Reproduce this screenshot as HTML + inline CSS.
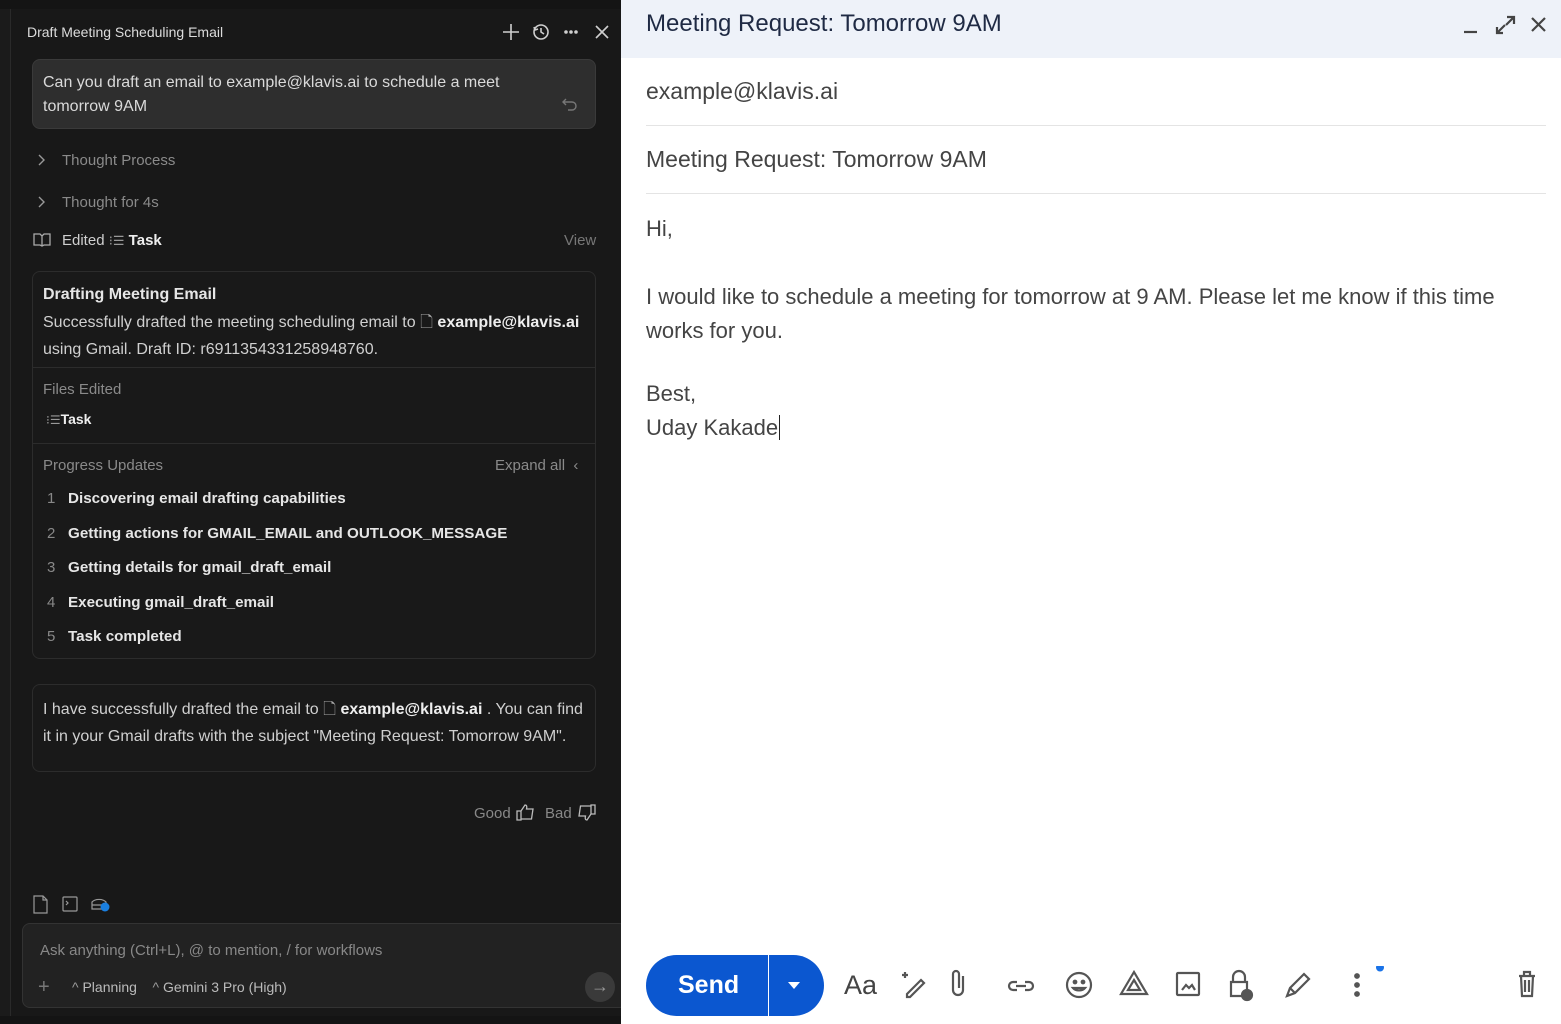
<!DOCTYPE html>
<html><head><meta charset="utf-8"><style>
*{margin:0;padding:0;box-sizing:border-box}
body{width:1561px;height:1024px;overflow:hidden;background:#181818;font-family:"Liberation Sans",sans-serif;position:relative}
.a{position:absolute;white-space:nowrap}
#left{position:absolute;left:0;top:0;width:621px;height:1024px;background:#181818;color:#ccc}
.t{font-size:15px;color:#d0d0d0}
.m{font-size:16px}
.g{color:#8a8a8a}
.b{font-weight:bold;color:#e6e6e6}
.card{position:absolute;left:32px;width:564px;border:1px solid #2c2c2c;border-radius:8px;background:#191919}
#right{position:absolute;left:621px;top:0;width:940px;height:1024px;background:#fff;color:#3c3c3c}
.e{font-size:22px;color:#444}
svg{position:absolute}
</style></head><body>
<div id="left">
 <div style="position:absolute;left:0;top:0;width:621px;height:9px;background:#141414"></div>
 <div style="position:absolute;left:0;top:9px;width:11px;height:1015px;background:#1b1b1b;border-right:1px solid #2a2a2a"></div>
 <div class="a" style="left:27px;top:24px;font-size:14px;color:#dcdcdc">Draft Meeting Scheduling Email</div>
 <svg style="left:502px;top:22px" width="110" height="20" fill="none" stroke="#cfcfcf" stroke-width="1.6">
  <path d="M9 2v16M1 10h16"/>
  <circle cx="39" cy="10" r="7"/><path d="M39 6v4l3 2M32 5l1 3 3-1"/>
  <circle cx="64" cy="10" r="1" fill="#cfcfcf"/><circle cx="69" cy="10" r="1" fill="#cfcfcf"/><circle cx="74" cy="10" r="1" fill="#cfcfcf"/>
  <path d="M94 4l12 12M106 4L94 16"/>
 </svg>
 <div style="position:absolute;left:32px;top:59px;width:564px;height:70px;background:#2e2e2e;border-radius:8px;border:1px solid #3a3a3a"></div>
 <div class="a t m" style="left:43px;top:71px;line-height:24px;color:#dadada">Can you draft an email to example@klavis.ai to schedule a meet<br>tomorrow 9AM</div>
 <svg style="left:562px;top:96px" width="16" height="16" fill="none" stroke="#777" stroke-width="1.4"><path d="M4 3L1 6l3 3M1 6h9a4 4 0 010 8H6"/></svg>
 <svg style="left:36px;top:153px" width="12" height="60" fill="none" stroke="#999" stroke-width="1.4"><path d="M3 2l5 5-5 5M3 44l5 5-5 5"/></svg>
 <div class="a t g" style="left:62px;top:152px">Thought Process</div>
 <div class="a t g" style="left:62px;top:194px">Thought for 4s</div>
 <svg style="left:33px;top:232px" width="18" height="16" fill="none" stroke="#aaa" stroke-width="1.3"><path d="M1 2h6l2 2 2-2h6v11h-6l-2 1-2-1H1zM9 4v10"/></svg>
 <div class="a t" style="left:62px;top:232px;color:#cfcfcf">Edited <span style="color:#999;font-size:13px">⁝☰</span> <b style="color:#eee">Task</b></div>
 <div class="a t" style="left:564px;top:232px;color:#777">View</div>

 <div class="card" style="top:271px;height:388px"></div>
 <div class="a b t m" style="left:43px;top:286px">Drafting Meeting Email</div>
 <div class="a t m" style="left:43px;top:309px;line-height:27px">Successfully drafted the meeting scheduling email to <span style="color:#aaa">🗋</span> <b style="color:#eee">example@klavis.ai</b><br>using Gmail. Draft ID: r6911354331258948760.</div>
 <div style="position:absolute;left:33px;top:367px;width:562px;height:1px;background:#2c2c2c"></div>
 <div class="a t g" style="left:43px;top:381px">Files Edited</div>
 <div class="a t" style="left:46px;top:411px"><span style="color:#999;font-size:12px">⁝☰</span><b style="color:#eee;font-size:14px">Task</b></div>
 <div style="position:absolute;left:33px;top:443px;width:562px;height:1px;background:#2c2c2c"></div>
 <div class="a t g" style="left:43px;top:457px">Progress Updates</div>
 <div class="a t g" style="left:495px;top:457px">Expand all &nbsp;‹</div>
 <div class="a t" style="left:47px;top:482px;line-height:34.5px;color:#888">1<br>2<br>3<br>4<br>5</div>
 <div class="a t b" style="left:68px;top:482px;line-height:34.5px;font-size:15.2px">Discovering email drafting capabilities<br>Getting actions for GMAIL_EMAIL and OUTLOOK_MESSAGE<br>Getting details for gmail_draft_email<br>Executing gmail_draft_email<br>Task completed</div>

 <div class="card" style="top:684px;height:88px"></div>
 <div class="a t m" style="left:43px;top:696px;line-height:27px">I have successfully drafted the email to <span style="color:#aaa">🗋</span> <b style="color:#eee">example@klavis.ai</b> . You can find<br>it in your Gmail drafts with the subject "Meeting Request: Tomorrow 9AM".</div>
 <div class="a t" style="left:474px;top:805px;color:#888">Good</div>
 <div class="a t" style="left:545px;top:805px;color:#888">Bad</div>
 <svg style="left:516px;top:803px" width="80" height="20" fill="none" stroke="#bbb" stroke-width="1.3">
  <path d="M1 8h4v9H1zM5 8l4-6c2 0 2 2 1.5 4H17l-1.5 10H5"/>
  <path d="M79 11h-4V2h4zM75 11l-4 6c-2 0-2-2-1.5-4H63l1.5-10H75"/>
 </svg>
 <svg style="left:32px;top:894px" width="80" height="22" fill="none" stroke="#999" stroke-width="1.2">
  <path d="M2 2h9l4 4v13H2zM11 2v4h4"/>
  <rect x="31" y="3" width="14" height="14" rx="1"/><path d="M34 7l2 2-2 2"/>
  <path d="M60 8a8 5 0 0114 0v7H60z M60 11h14"/>
  <circle cx="73" cy="13" r="4.5" fill="#1a7fe0" stroke="none"/>
 </svg>
 <div style="position:absolute;left:22px;top:923px;width:605px;height:85px;background:#222;border:1px solid #333;border-radius:8px"></div>
 <div class="a t" style="left:40px;top:942px;color:#888">Ask anything (Ctrl+L), @ to mention, / for workflows</div>
 <div class="a" style="left:38px;top:976px;font-size:20px;color:#777">+</div>
 <div class="a" style="left:72px;top:979px;font-size:14px;color:#bbb"><span style="color:#999">^</span> Planning &nbsp;&nbsp;&nbsp;<span style="color:#999">^</span> Gemini 3 Pro (High)</div>
 <div style="position:absolute;left:585px;top:972px;width:30px;height:30px;border-radius:50%;background:#3a3a3a;color:#999;font-size:18px;text-align:center;line-height:29px">→</div>
 <div style="position:absolute;left:0;top:1016px;width:621px;height:8px;background:#141414"></div>
</div>

<div id="right">
 <div style="position:absolute;left:0;top:0;width:940px;height:58px;background:#eef2f9"></div>
 <div class="a" style="left:25px;top:10px;font-size:24px;color:#1f2a44">Meeting Request: Tomorrow 9AM</div>
 <svg style="left:840px;top:14px" width="90" height="22" fill="none" stroke="#444" stroke-width="2.2">
  <path d="M3 18h13"/>
  <path d="M36 13v6h6M36 19l8-8M46 3h7v7M53 3l-8 8"/>
  <path d="M71 4l13 13M84 4L71 17"/>
 </svg>
 <div class="a e" style="left:25px;top:78px;font-size:23px">example@klavis.ai</div>
 <div style="position:absolute;left:25px;top:125px;width:900px;height:1px;background:#e4e4e4"></div>
 <div class="a e" style="left:25px;top:146px;font-size:23px">Meeting Request: Tomorrow 9AM</div>
 <div style="position:absolute;left:25px;top:193px;width:900px;height:1px;background:#e4e4e4"></div>
 <div class="a e" style="left:25px;top:212px;line-height:34px">Hi,<br><br>I would like to schedule a meeting for tomorrow at 9 AM. Please let me know if this time<br>works for you.</div>
 <div class="a e" style="left:25px;top:377px;line-height:34px">Best,<br>Uday Kakade<span style="border-left:1.5px solid #222;margin-left:1px"></span></div>
 <div style="position:absolute;left:25px;top:955px;width:178px;height:61px;background:#0b57d0;border-radius:31px"></div>
 <div style="position:absolute;left:147px;top:955px;width:1px;height:61px;background:#fff"></div>
 <div class="a" style="left:57px;top:971px;font-size:25px;color:#fff;font-weight:bold">Send</div>
 <svg style="left:166px;top:981px" width="14" height="10"><path d="M1 1h12L7 8z" fill="#fff"/></svg>
 <div class="a" style="left:223px;top:970px;font-size:27px;color:#444">Aa</div>
 <svg style="left:278px;top:966px" width="640" height="40" fill="none" stroke="#555" stroke-width="2.2">
  <path d="M8 28l14-14 3 3-14 14H8zM6 6v6M3 9h6"/>
  <path d="M64 10v14a5 5 0 01-10 0V8a3 3 0 016 0v14"/>
  <path d="M118 16h-4a4 4 0 000 8h4M126 16h4a4 4 0 010 8h-4M117 20h10"/>
  <circle cx="180" cy="19" r="12"/><circle cx="176" cy="16" r="1.3" fill="#555"/><circle cx="184" cy="16" r="1.3" fill="#555"/><path d="M174 22a7 5 0 0012 0z"/>
  <path d="M235 6l13 22h-26zM235 14l6 10h-12z"/>
  <rect x="278" y="7" width="22" height="22" rx="1"/><path d="M283 24l4-5 3 3 3-3 3 5"/>
  <path d="M334 16v-5a6 6 0 0112 0v5M332 16h16v14h-16z"/><circle cx="348" cy="29" r="5" fill="#555"/>
  <path d="M388 30l3-8 14-14 5 5-14 14zM391 22l5 5"/>
  <circle cx="458" cy="10" r="1.8" fill="#555"/><circle cx="458" cy="19" r="1.8" fill="#555"/><circle cx="458" cy="28" r="1.8" fill="#555"/>
  <circle cx="481" cy="1.5" r="4" fill="#1a73e8" stroke="none"/>
  <path d="M620 10h16M625 10V6h6v4M622 10l1 20h10l1-20M626 14v12M630 14v12"/>
 </svg>
</div>
</body></html>
